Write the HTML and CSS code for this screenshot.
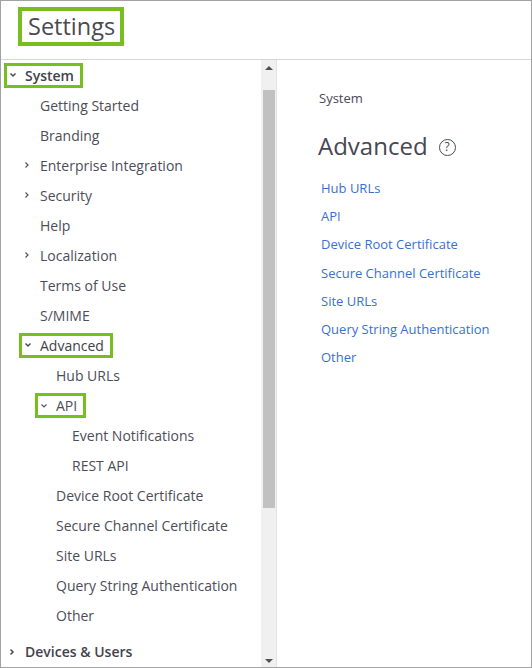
FILE: index.html
```html
<!DOCTYPE html>
<html>
<head>
<meta charset="utf-8">
<link rel="stylesheet" href="styles.css">
</head>
<body>
<div class="app">
  <header class="header">
    <h1 class="title">Settings</h1>
  </header>
  <div class="main">
    <nav class="nav">
      <div class="row l0 bold"><span class="hl"><span class="chev"><svg width="8" height="6" viewBox="0 0 8 6"><polyline points="1.5,1.5 4,4 6.5,1.5" fill="none" stroke="#4a4a55" stroke-width="1.5"/></svg></span>System</span></div>
      <div class="row l1"><span class="chev"></span>Getting Started</div>
      <div class="row l1"><span class="chev"></span>Branding</div>
      <div class="row l1"><span class="chev"><svg width="6" height="8" viewBox="0 0 6 8"><polyline points="1.5,1.5 4,4 1.5,6.5" fill="none" stroke="#55555f" stroke-width="1.2"/></svg></span>Enterprise Integration</div>
      <div class="row l1"><span class="chev"><svg width="6" height="8" viewBox="0 0 6 8"><polyline points="1.5,1.5 4,4 1.5,6.5" fill="none" stroke="#55555f" stroke-width="1.2"/></svg></span>Security</div>
      <div class="row l1"><span class="chev"></span>Help</div>
      <div class="row l1"><span class="chev"><svg width="6" height="8" viewBox="0 0 6 8"><polyline points="1.5,1.5 4,4 1.5,6.5" fill="none" stroke="#55555f" stroke-width="1.2"/></svg></span>Localization</div>
      <div class="row l1"><span class="chev"></span>Terms of Use</div>
      <div class="row l1"><span class="chev"></span>S/MIME</div>
      <div class="row l1 medium"><span class="hl"><span class="chev"><svg width="8" height="6" viewBox="0 0 8 6"><polyline points="1.5,1.5 4,4 6.5,1.5" fill="none" stroke="#4a4a55" stroke-width="1.5"/></svg></span>Advanced</span></div>
      <div class="row l2"><span class="chev"></span>Hub URLs</div>
      <div class="row l2"><span class="hl"><span class="chev"><svg width="8" height="6" viewBox="0 0 8 6"><polyline points="1.5,1.5 4,4 6.5,1.5" fill="none" stroke="#55555f" stroke-width="1.2"/></svg></span>API</span></div>
      <div class="row l3"><span class="chev"></span>Event Notifications</div>
      <div class="row l3"><span class="chev"></span>REST API</div>
      <div class="row l2"><span class="chev"></span>Device Root Certificate</div>
      <div class="row l2"><span class="chev"></span>Secure Channel Certificate</div>
      <div class="row l2"><span class="chev"></span>Site URLs</div>
      <div class="row l2"><span class="chev"></span>Query String Authentication</div>
      <div class="row l2"><span class="chev"></span>Other</div>
      <div class="row l0 bold group"><span class="chev"><svg width="6" height="8" viewBox="0 0 6 8"><polyline points="1.5,1.5 4,4 1.5,6.5" fill="none" stroke="#4a4a55" stroke-width="1.5"/></svg></span>Devices &amp; Users</div>
    </nav>
    <div class="scrollbar">
      <div class="arrow up"></div>
      <div class="track"><div class="thumb"></div></div>
      <div class="arrow down"></div>
    </div>
    <section class="content">
      <div class="crumb">System</div>
      <h2 class="heading">Advanced <span class="help">?</span></h2>
      <ul class="links">
        <li><a href="#">Hub URLs</a></li>
        <li><a href="#">API</a></li>
        <li><a href="#">Device Root Certificate</a></li>
        <li><a href="#">Secure Channel Certificate</a></li>
        <li><a href="#">Site URLs</a></li>
        <li><a href="#">Query String Authentication</a></li>
        <li><a href="#">Other</a></li>
      </ul>
    </section>
  </div>
</div>
</body>
</html>
```
FILE: styles.css
```css
* { box-sizing: border-box; }
html, body { margin: 0; padding: 0; background: #fff; }
body { font-family: "Open Sans", "Noto Sans", sans-serif; color: #4a4a55; }

.app {
  width: 532px;
  height: 668px;
  border: 1px solid #a2a2a2;
  display: flex;
  flex-direction: column;
  overflow: hidden;
}

.header {
  height: 59px;
  flex: none;
  border-bottom: 1px solid #d3d7db;
  padding: 6px 0 0 17px;
}
.title {
  display: inline-block;
  margin: 0;
  font-weight: 400;
  font-size: 23.5px;
  line-height: 31px;
  color: #4a4a52;
  border: 4px solid #78be20;
  padding: 0 5px 0 6px;
}

.main {
  flex: 1;
  display: flex;
  min-height: 0;
}

.nav {
  width: 260px;
  flex: none;
  font-size: 14px;
  color: #4d4d57;
  overflow: hidden;
}
.row {
  height: 30.05px;
  display: flex;
  align-items: center;
  white-space: nowrap;
}
.row.l0 { padding-left: 7px; }
.row.l1 { padding-left: 22px; }
.row.l2 { padding-left: 38px; }
.row.l3 { padding-left: 54px; }
.row.bold { font-weight: 600; color: #43434d; }
.row.medium { font-weight: 500; color: #3f3f49; }
.row.group { margin-top: 6px; }

.chev {
  width: 17px;
  flex: none;
  display: inline-flex;
  align-items: center;
  padding-left: 1px;
}
.hl {
  display: inline-flex;
  align-items: center;
  height: 25px;
  border: 3px solid #78be20;
  margin-left: -4px;
  padding-left: 1px;
  padding-right: 6px;
}

.scrollbar {
  width: 16px;
  flex: none;
  background: #f0f0f0;
  border-right: 1px solid #dfe3e8;
  display: flex;
  flex-direction: column;
  align-items: center;
  padding-left: 1px;
}
.arrow {
  width: 0;
  height: 0;
  border-left: 4px solid transparent;
  border-right: 4px solid transparent;
  flex: none;
}
.arrow.up { border-bottom: 4px solid #505050; margin-top: 6px; }
.arrow.down { border-top: 4px solid #505050; margin-bottom: 4px; }
.track { flex: 1; width: 100%; padding-top: 20px; display: flex; justify-content: center; }
.thumb { width: 12px; height: 418px; background: #c1c1c1; }

.content {
  flex: 1;
  padding: 29px 0 0 42px;
}
.crumb {
  font-size: 13px;
  line-height: 18px;
  color: #4a4a55;
}
.heading {
  margin: 23px 0 0 -1px;
  font-size: 24px;
  font-weight: 400;
  line-height: 32px;
  color: #474752;
  display: flex;
  align-items: center;
}
.help {
  display: inline-flex;
  width: 17px;
  height: 17px;
  border: 1.5px solid #4a4a55;
  border-radius: 50%;
  font-size: 12px;
  line-height: 1;
  align-items: center;
  justify-content: center;
  margin-left: 11px;
  margin-top: 2px;
}
.links {
  list-style: none;
  margin: 16px 0 0 2px;
  padding: 0;
  font-size: 13px;
}
.links li { height: 28.2px; line-height: 20px; }
.links a { color: #3a6fd2; text-decoration: none; }
```
